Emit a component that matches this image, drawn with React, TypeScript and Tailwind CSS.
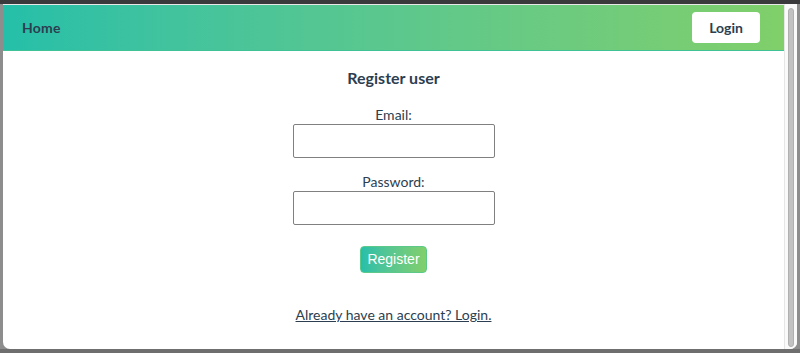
import React from "react";

export default function App() {
  return (
    <div className="w-[800px] h-[353px] overflow-hidden flex flex-col bg-gradient-to-b from-[#9a9a9a] to-[#6e6e6e]" style={{ fontFamily: "Lato, 'Noto Sans', sans-serif" }}>
      <div className="h-[4px] bg-[#3a3a3c] shrink-0" />
      <div className="flex h-[345px] pl-[3px] pr-[3px] bg-[#8d8d8d]">
        <div className="flex flex-1 bg-white rounded-b-[7px] overflow-hidden">
          <div className="flex flex-col flex-1">
            <div className="h-[1px] bg-[#e8e8e8]" />
            <nav className="h-[46px] flex items-center justify-between pl-[19px] pr-[24px] bg-gradient-to-r from-[#24bfa9] to-[#80cf6a] border-b border-[#3fc295]">
              <span className="text-[14px] font-bold text-[#2c3e50] tracking-[0.2px]">Home</span>
              <button className="w-[68px] h-[31px] bg-white rounded-[4px] text-[14px] font-bold text-[#2c3e50]">Login</button>
            </nav>
            <div className="flex flex-col items-center text-[#2c3e50]">
              <h1 className="mt-[17px] text-[16px] font-bold leading-[20px]">Register user</h1>
              <label className="mt-[19px] text-[14px] leading-[16px]">Email:</label>
              <input className="mt-[1px] w-[202px] h-[34px] border border-[#808080] rounded-[2px]" />
              <label className="mt-[16px] text-[14px] leading-[16px]">Password:</label>
              <input type="password" className="mt-[1px] w-[202px] h-[34px] border border-[#808080] rounded-[2px]" />
              <button className="mt-[21px] w-[67px] h-[27px] rounded-[4px] bg-gradient-to-r from-[#24bfa9] to-[#80cf6a] text-white text-[14px] border border-[#5cc98a]" style={{ fontFamily: "'Liberation Sans', Arial, sans-serif" }}>Register</button>
              <a className="mt-[33px] text-[14px] underline leading-[18px] cursor-pointer">Already have an account? Login.</a>
            </div>
          </div>
          <div className="w-[13px] bg-[#fafafa] border-l border-[#e6e6e6] flex justify-center pt-[4px] pb-[2px]">
            <div className="w-[6px] h-full rounded-full bg-[#c2c2c2] border border-[#b0b0b0]" />
          </div>
        </div>
      </div>
    </div>
  );
}
